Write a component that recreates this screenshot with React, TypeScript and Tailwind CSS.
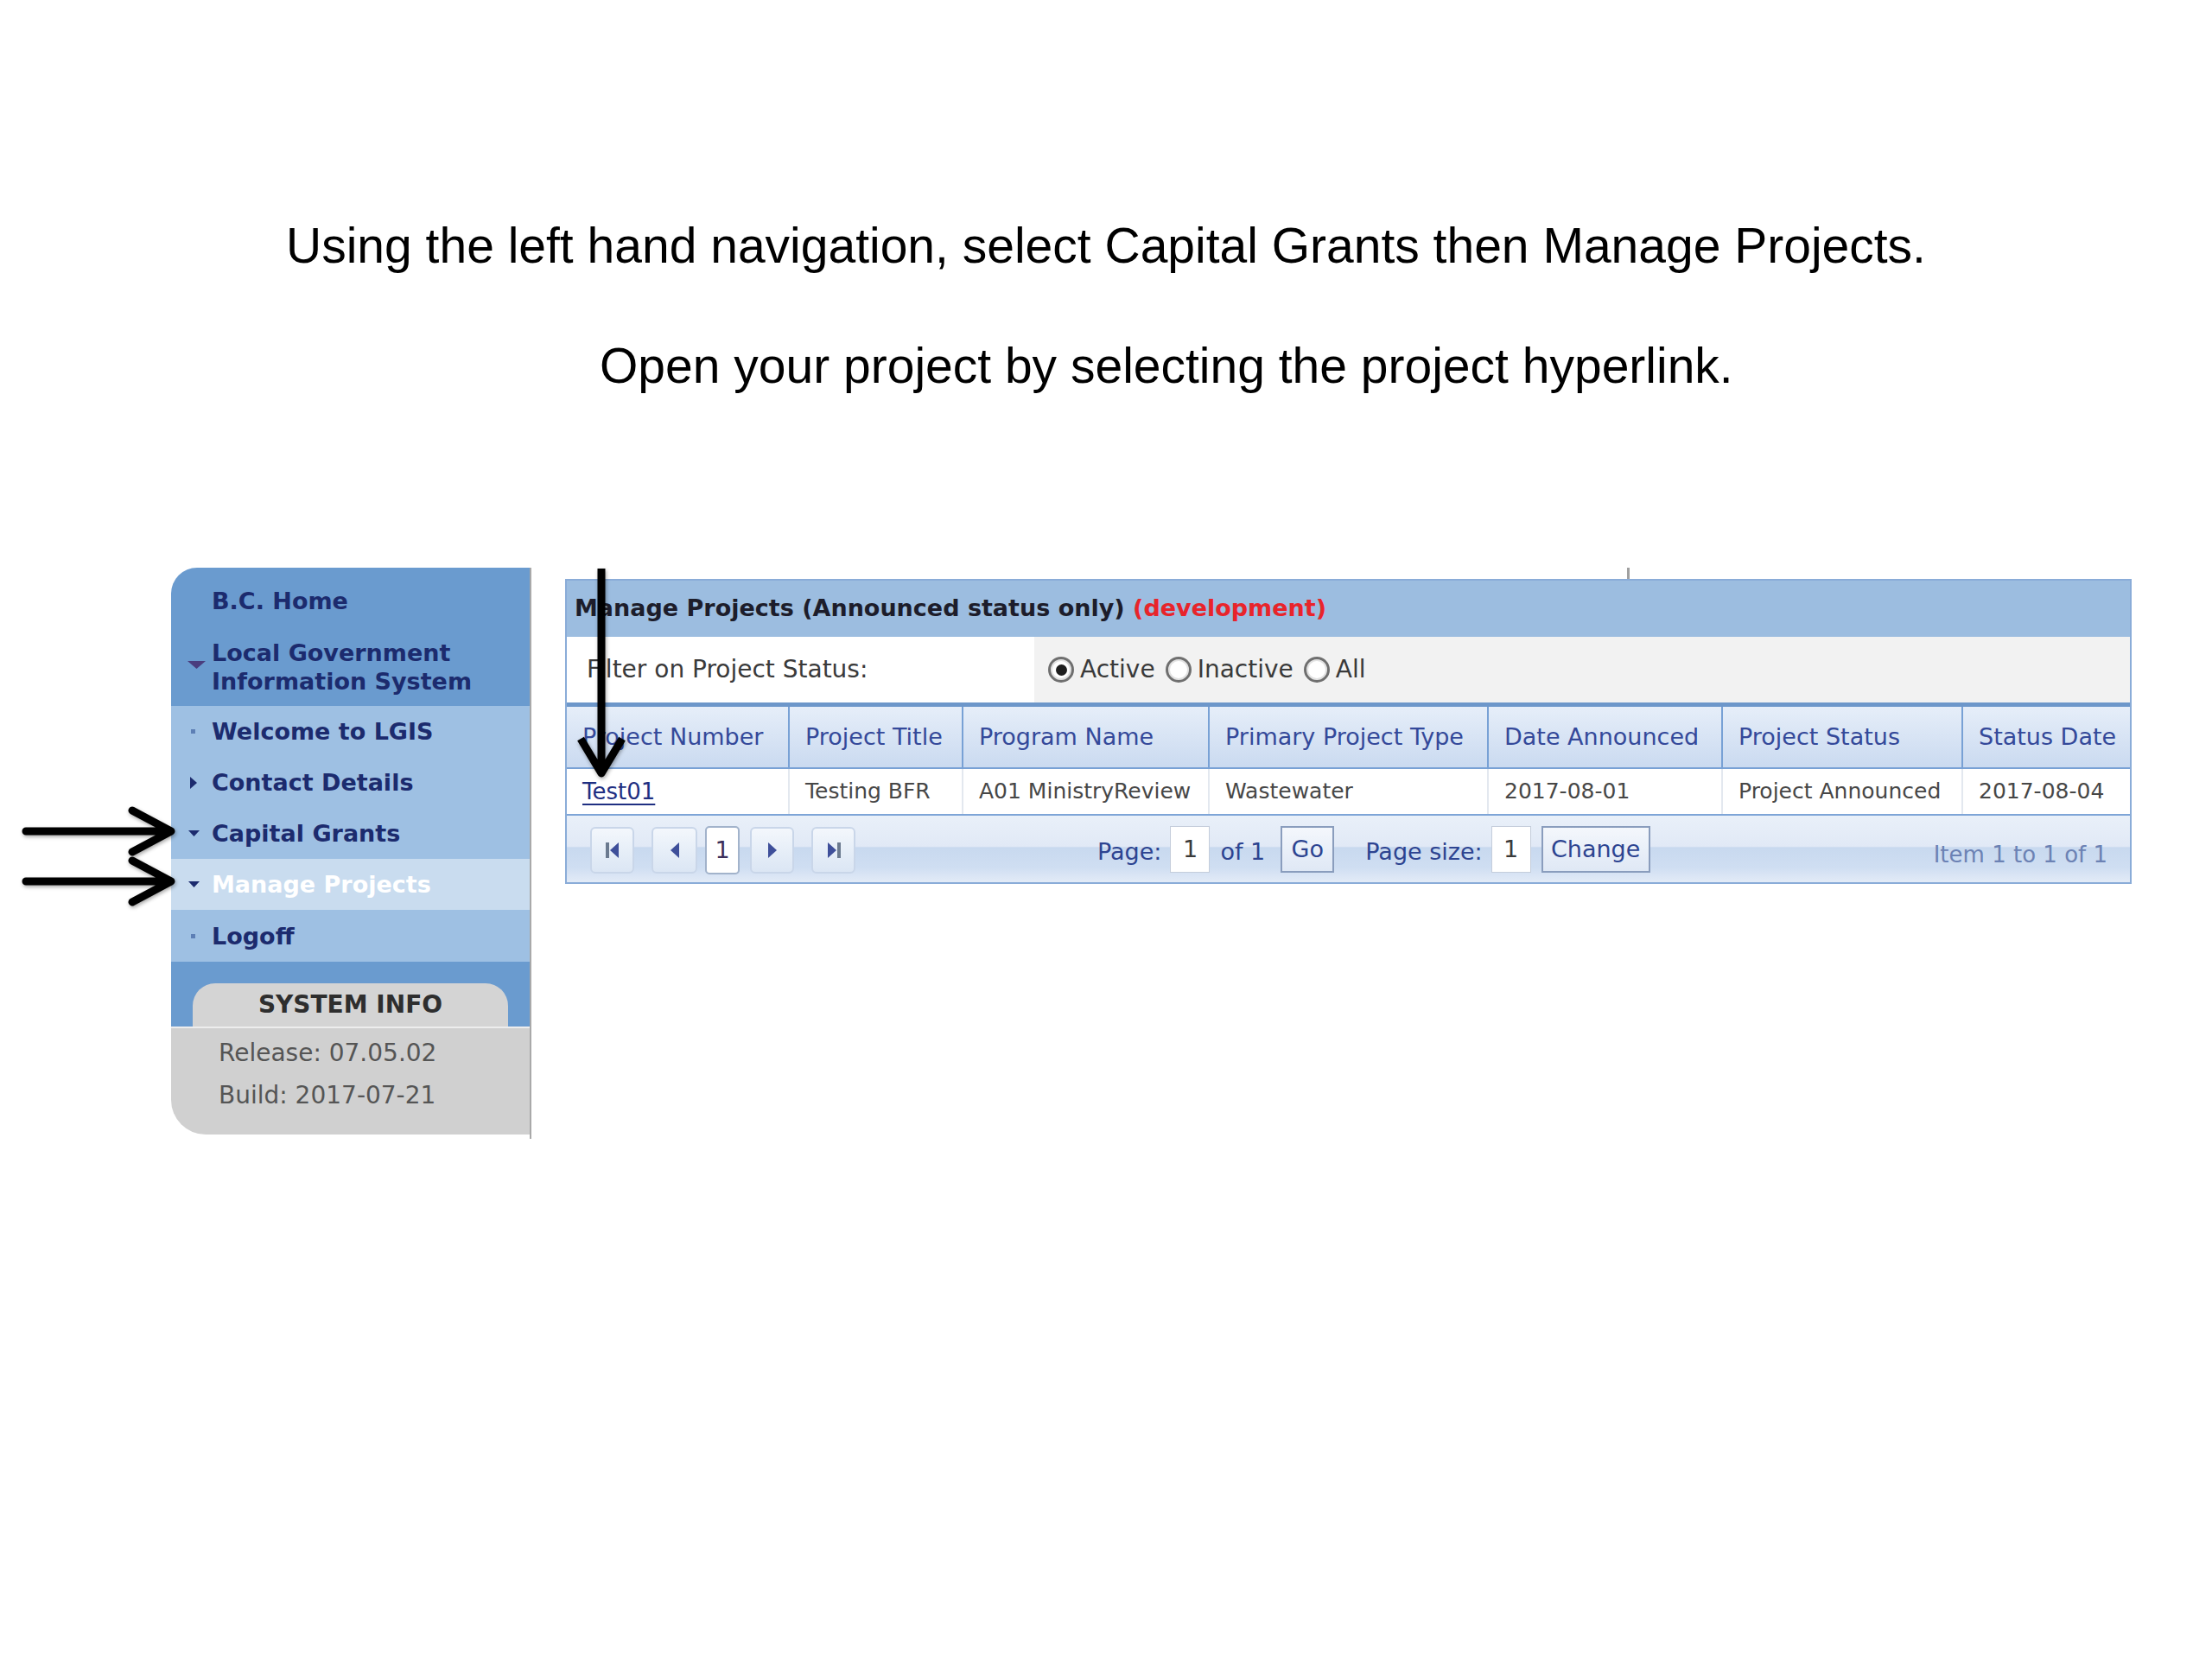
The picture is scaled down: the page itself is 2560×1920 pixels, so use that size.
import React from "react";

const DownTri = ({ w = 13, h = 7, color = "#1c2b6e" }: { w?: number; h?: number; color?: string }) => (
  <svg width={w} height={h} viewBox={`0 0 ${w} ${h}`}>
    <polygon points={`0,0 ${w},0 ${w / 2},${h}`} fill={color} />
  </svg>
);

const RightTri = () => (
  <svg width={8} height={14} viewBox="0 0 8 14">
    <polygon points="0,0 8,7 0,14" fill="#1c2b6e" />
  </svg>
);

const Bullet = () => <span className="block w-[5px] h-[5px] bg-[#5d7fb5]" />;

function NavRow({
  icon,
  label,
  active = false,
  h = "h-[59px]",
}: {
  icon: React.ReactNode;
  label: string;
  active?: boolean;
  h?: string;
}) {
  return (
    <div className={`${h} flex items-center pl-[20px] ${active ? "bg-[#c9dcef]" : ""}`}>
      <span className="w-[27px] flex items-center">{icon}</span>
      <span className={`text-[27px] leading-[33px] font-bold ${active ? "text-white" : "text-[#1c2b6e]"}`}>{label}</span>
    </div>
  );
}

function Radio({ checked, label }: { checked?: boolean; label: string }) {
  return (
    <span className="flex items-center">
      <span className="w-[30px] h-[30px] rounded-full border-[3px] border-[#6f6f6f] bg-white flex items-center justify-center shadow-[inset_0_0_0_2px_#e2e2e2]">
        {checked && <span className="w-[13px] h-[13px] rounded-full bg-[#1e1e1e]" />}
      </span>
      <span className="ml-[7px] text-[28px] text-[#3a3a3a]">{label}</span>
    </span>
  );
}

function PagerBtn({ children, w = "w-[51px]" }: { children: React.ReactNode; w?: string }) {
  return (
    <span
      className={`${w} h-[54px] rounded-[6px] border-2 border-[#c9d6e9] bg-linear-to-b from-[#f3f7fc] to-[#dbe6f4] flex items-center justify-center`}
    >
      {children}
    </span>
  );
}

const headers = [
  "Project Number",
  "Project Title",
  "Program Name",
  "Primary Project Type",
  "Date Announced",
  "Project Status",
  "Status Date",
];
const cells = ["Test01", "Testing BFR", "A01 MinistryReview", "Wastewater", "2017-08-01", "Project Announced", "2017-08-04"];

export default function App() {
  return (
    <div className="relative w-[2560px] h-[1920px] bg-white overflow-hidden">
      <p className="pt-[256px] text-center text-[57px] leading-[57px] text-black font-['Liberation_Sans',Arial,sans-serif]">
        Using the left hand navigation, select Capital Grants then Manage Projects.
      </p>
      <p className="mt-[82px] pl-[694px] text-[57px] leading-[57px] text-black font-['Liberation_Sans',Arial,sans-serif]">
        Open your project by selecting the project hyperlink.
      </p>

      <div className="mt-[205px] flex items-start font-['DejaVu_Sans',Verdana,sans-serif]">
        {/* Sidebar */}
        <div className="ml-[198px] w-[417px] border-r-2 border-[#a9a9a9] pb-[5px]">
          <div className="bg-[#6a9bcf] rounded-tl-[30px] pt-[22px] pb-[12px]">
            <div className="pl-[47px] text-[27px] leading-[33px] font-bold text-[#1c2b6e]">B.C. Home</div>
            <div className="mt-[27px] flex pl-[19px]">
              <span className="w-[28px] pt-[26px]">
                <DownTri w={21} h={9} color="#4a3d7e" />
              </span>
              <span className="text-[27px] leading-[33px] font-bold text-[#1c2b6e]">
                Local Government
                <br />
                Information System
              </span>
            </div>
          </div>
          <div className="bg-[#9ec0e3]">
            <NavRow icon={<span className="ml-[3px]"><Bullet /></span>} label="Welcome to LGIS" />
            <NavRow icon={<span className="ml-[2px] flex"><RightTri /></span>} label="Contact Details" />
            <NavRow icon={<DownTri />} label="Capital Grants" />
            <NavRow icon={<DownTri />} label="Manage Projects" active />
            <NavRow icon={<span className="ml-[3px]"><Bullet /></span>} label="Logoff" h="h-[60px]" />
          </div>
          <div className="bg-[#6a9bcf] pt-[25px] px-[25px]">
            <div className="h-[50px] rounded-t-[26px] bg-[#d4d4d4] flex items-center justify-center text-[28px] font-bold text-[#2e2e2e]">
              SYSTEM INFO
            </div>
          </div>
          <div className="h-[2px] bg-[#ededed]" />
          <div className="bg-[#d0d0d0] rounded-bl-[40px] pt-[4px] pb-[21px] pl-[55px] text-[28px] leading-[49px] text-[#555555]">
            <div>Release: 07.05.02</div>
            <div>Build: 2017-07-21</div>
          </div>
        </div>

        {/* Main panel */}
        <div className="ml-[39px] mt-[13px] w-[1813px] border-2 border-[#8aacd8]">
          <div className="h-[65px] bg-[#9cbde0] flex items-center pl-[9px] text-[27px] font-bold text-[#1d1d2b]">
            Manage Projects (Announced status only)&nbsp;<span className="text-[#e8242b]">(development)</span>
          </div>
          <div className="h-[81px] flex border-b-[5px] border-[#6d97ca]">
            <div className="w-[541px] bg-white flex items-center pl-[23px] text-[28px] text-[#3a3a3a]">
              Filter on Project Status:
            </div>
            <div className="flex-1 bg-[#f2f2f2] flex items-center pl-[16px] gap-[12px]">
              <Radio checked label="Active" />
              <Radio label="Inactive" />
              <Radio label="All" />
            </div>
          </div>
          <div className="grid grid-cols-[256px_201px_285px_323px_271px_278px_195px] h-[72px] border-b-2 border-[#78a1d5] bg-linear-to-b from-[#e6eef9] to-[#cadaf0]">
            {headers.map((h, i) => (
              <div
                key={h}
                className={`flex items-center pl-[18px] text-[27px] text-[#34499a] whitespace-nowrap ${
                  i > 0 ? "border-l-2 border-[#78a1d5]" : ""
                }`}
              >
                {h}
              </div>
            ))}
          </div>
          <div className="grid grid-cols-[256px_201px_285px_323px_271px_278px_195px] h-[54px] border-b-2 border-[#7ea5d7] bg-white">
            {cells.map((c, i) => (
              <div
                key={c}
                className={`flex items-center pl-[18px] text-[25px] whitespace-nowrap ${
                  i > 0 ? "border-l-2 border-[#e3e8ef] text-[#474747]" : ""
                }`}
              >
                {i === 0 ? (
                  <span className="text-[26px] text-[#1f2f82] underline decoration-2 underline-offset-[5px]">{c}</span>
                ) : (
                  c
                )}
              </div>
            ))}
          </div>
          <div className="h-[77px] flex items-start pt-[12px] pl-[27px] pr-[26px] bg-[linear-gradient(to_bottom,#e9f0f9_0%,#e1e9f6_46%,#c8d9ef_48%,#cfdef2_78%,#e3ebf7_100%)] text-[27px] text-[#2d4491]">
            <div className="flex items-center">
              <PagerBtn>
                <svg width="22" height="24" viewBox="0 0 22 24">
                  <rect x="3" y="3" width="4" height="18" fill="#6b7a8f" />
                  <polygon points="18,3 8,12 18,21" fill="#3e4f9a" />
                </svg>
              </PagerBtn>
              <span className="w-[20px]" />
              <PagerBtn w="w-[53px]">
                <svg width="14" height="24" viewBox="0 0 14 24">
                  <polygon points="12,3 2,12 12,21" fill="#3e4f9a" />
                </svg>
              </PagerBtn>
              <span className="w-[9px]" />
              <span className="w-[40px] h-[56px] rounded-[5px] border-2 border-[#a2b3cb] bg-white flex items-center justify-center text-[#3b2f5a]">
                1
              </span>
              <span className="w-[12px]" />
              <PagerBtn>
                <svg width="14" height="24" viewBox="0 0 14 24">
                  <polygon points="2,3 12,12 2,21" fill="#3e4f9a" />
                </svg>
              </PagerBtn>
              <span className="w-[20px]" />
              <PagerBtn>
                <svg width="22" height="24" viewBox="0 0 22 24">
                  <polygon points="4,3 14,12 4,21" fill="#3e4f9a" />
                  <rect x="15" y="3" width="4" height="18" fill="#6b7a8f" />
                </svg>
              </PagerBtn>
            </div>
            <div className="ml-[280px] flex items-center h-[54px]">
              <span className="mt-[6px]">Page:</span>
              <span className="ml-[10px] w-[46px] h-[54px] bg-white border border-[#c4cddb] flex items-center justify-center text-[#3a3a3a]">
                1
              </span>
              <span className="ml-[12px] mt-[6px]">of 1</span>
              <span className="ml-[18px] w-[62px] h-[54px] border-2 border-[#8a9dbd] bg-linear-to-b from-[#f4f7fc] to-[#dfe8f5] flex items-center justify-center">
                Go
              </span>
              <span className="ml-[36px] mt-[6px]">Page size:</span>
              <span className="ml-[10px] w-[46px] h-[54px] bg-white border border-[#c4cddb] flex items-center justify-center text-[#3a3a3a]">
                1
              </span>
              <span className="ml-[12px] w-[126px] h-[54px] border-2 border-[#8a9dbd] bg-linear-to-b from-[#f4f7fc] to-[#dfe8f5] flex items-center justify-center">
                Change
              </span>
            </div>
            <div className="ml-auto h-[54px] flex items-center mt-[6px] text-[#6c82b4] text-[26px]">Item 1 to 1 of 1</div>
          </div>
        </div>
      </div>

      {/* small tick above panel */}
      <div className="absolute left-[1883px] top-[657px] w-[3px] h-[13px] bg-[#a0a0a0]" />

      {/* annotation arrows */}
      <svg
        className="absolute left-[24px] top-[930px] drop-shadow-[1px_2px_2px_rgba(0,0,0,0.35)]"
        width="185"
        height="64"
        viewBox="0 0 185 64"
      >
        <path d="M6 32 H170 M129 8 L174 32 L129 56" stroke="#000" strokeWidth="9" fill="none" strokeLinecap="round" strokeLinejoin="round" />
      </svg>
      <svg
        className="absolute left-[24px] top-[988px] drop-shadow-[1px_2px_2px_rgba(0,0,0,0.35)]"
        width="185"
        height="64"
        viewBox="0 0 185 64"
      >
        <path d="M6 32 H170 M129 8 L174 32 L129 56" stroke="#000" strokeWidth="9" fill="none" strokeLinecap="round" strokeLinejoin="round" />
      </svg>
      <svg
        className="absolute left-[660px] top-[650px] drop-shadow-[1px_2px_2px_rgba(0,0,0,0.35)]"
        width="72"
        height="260"
        viewBox="0 0 72 260"
      >
        <path d="M36 8 V240 M12 205 L36 245 L60 205" stroke="#000" strokeWidth="9" fill="none" strokeLinecap="butt" strokeLinejoin="round" />
      </svg>
    </div>
  );
}
